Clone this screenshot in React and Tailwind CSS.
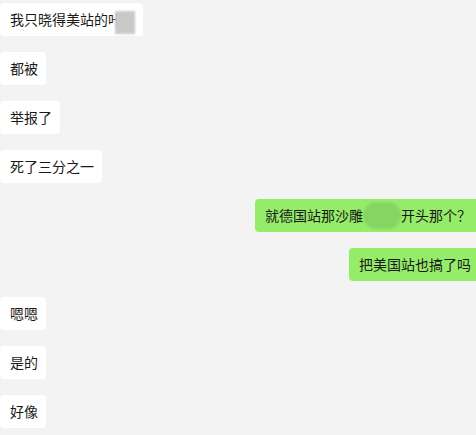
import React from 'react';

// 左側（相手）の吹き出し
function Left({ children, className = '' }) {
  return (
    <div className="flex">
      <div className={`relative bg-white rounded-[4px] pl-[10px] pr-[8px] py-[7px] leading-[19px] ${className}`}>
        {children}
      </div>
    </div>
  );
}

// 右側（自分）の吹き出し
function Right({ children }) {
  return (
    <div className="flex justify-end">
      <div className="bg-[#95ec69] rounded-[4px] pl-[10px] pr-[10px] py-[7px] leading-[19px] -mr-[5px] flex items-center">
        {children}
      </div>
    </div>
  );
}

export default function App() {
  return (
    <div
      className="w-[476px] h-[435px] overflow-hidden bg-[#f3f3f3] text-[14px] text-[#191919] pt-[3px] flex flex-col gap-[16px]"
      style={{ fontFamily: '"Noto Sans CJK SC", "Microsoft YaHei", sans-serif' }}
    >
      <Left className="w-[143px] overflow-hidden whitespace-nowrap">
        我只晓得美站的咔
        <span className="absolute left-[115px] top-[8px] w-[20px] h-[23px] bg-[#c9c9c9] blur-[1px]" />
      </Left>
      <Left>都被</Left>
      <Left>举报了</Left>
      <Left>死了三分之一</Left>
      <Right>
        就德国站那沙雕
        <span className="inline-block w-[38px] h-[27px] -my-[4px] rounded-full bg-[#86d563] blur-[1px]" />
        开头那个？
      </Right>
      <Right>把美国站也搞了吗</Right>
      <Left>嗯嗯</Left>
      <Left>是的</Left>
      <Left>好像</Left>
    </div>
  );
}
